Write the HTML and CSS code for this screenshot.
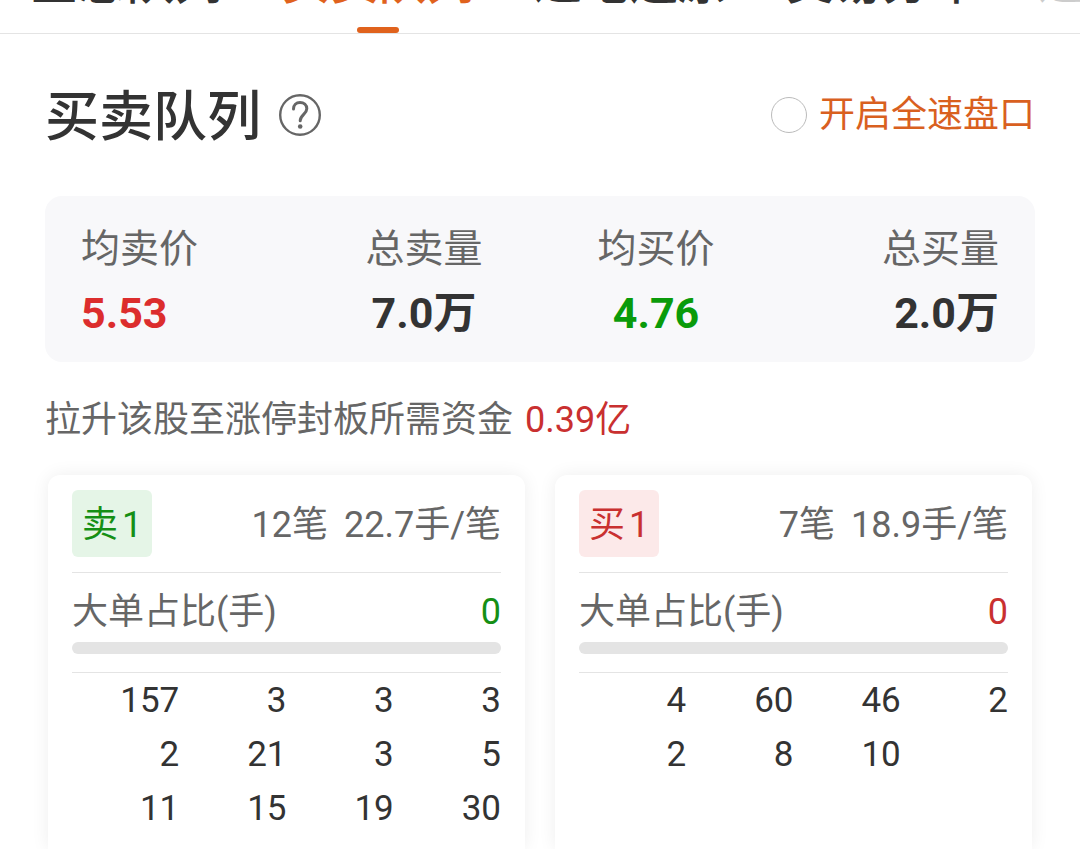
FILE: index.html
```html
<!DOCTYPE html>
<html lang="zh-CN">
<head>
<meta charset="utf-8">
<meta name="viewport" content="width=device-width, initial-scale=1">
<title>买卖队列</title>
<link rel="stylesheet" href="styles.css">
</head>
<body>
<nav class="tabs">
  <a class="tab" href="#all">全息队列</a>
  <a class="tab tab-active" href="#queue" aria-current="page">买卖队列</a>
  <a class="tab" href="#restore">逐笔还原</a>
  <a class="tab" href="#spread">交易分布</a>
  <a class="tab tab-faded" href="#more">逐</a>
</nav>
<main class="page">
  <header class="heading">
    <h1 class="title">买卖队列</h1>
    <button class="help" type="button" aria-label="说明">
      <svg viewBox="0 0 42 42" width="42" height="42" fill="none" stroke="#666" stroke-linecap="round">
        <circle cx="21" cy="21" r="19.8" stroke-width="2.4"/>
        <path d="M14.500 15C14.500 11 17.200 8.500 21 8.500s6.800 2.500 6.800 6.300c0 5.200-6.600 6-6.600 12" stroke-width="3"/>
        <circle cx="21.200" cy="32.500" r="2.300" fill="#666" stroke="none"/>
      </svg>
    </button>
    <label class="speed"><input class="speed-input" type="checkbox">开启全速盘口</label>
  </header>
  <section class="summary">
    <dl class="pair">
      <div class="stat stat-left"><dt>均卖价</dt><dd class="up">5.53</dd></div>
      <div class="stat"><dt>总卖量</dt><dd>7.0万</dd></div>
    </dl>
    <dl class="pair">
      <div class="stat"><dt>均买价</dt><dd class="down">4.76</dd></div>
      <div class="stat stat-right"><dt>总买量</dt><dd>2.0万</dd></div>
    </dl>
  </section>
  <p class="note">拉升该股至涨停封板所需资金<span class="note-value">0.39亿</span></p>
  <div class="cards">
    <section class="card">
      <div class="card-head">
        <span class="badge badge-sell"><span>卖</span><span>1</span></span>
        <span class="counts"><span>12笔</span><span>22.7手/笔</span></span>
      </div>
      <div class="ratio">
        <div class="ratio-row"><span>大单占比(手)</span><span class="ratio-sell">0</span></div>
        <div class="track"></div>
      </div>
      <table class="orders">
        <tr><td>157</td><td>3</td><td>3</td><td>3</td></tr>
        <tr><td>2</td><td>21</td><td>3</td><td>5</td></tr>
        <tr><td>11</td><td>15</td><td>19</td><td>30</td></tr>
      </table>
    </section>
    <section class="card">
      <div class="card-head">
        <span class="badge badge-buy"><span>买</span><span>1</span></span>
        <span class="counts"><span>7笔</span><span>18.9手/笔</span></span>
      </div>
      <div class="ratio">
        <div class="ratio-row"><span>大单占比(手)</span><span class="ratio-buy">0</span></div>
        <div class="track"></div>
      </div>
      <table class="orders">
        <tr><td>4</td><td>60</td><td>46</td><td>2</td></tr>
        <tr><td>2</td><td>8</td><td>10</td><td></td></tr>
      </table>
    </section>
  </div>
</main>
</body>
</html>
```

FILE: styles.css
```css
* {
  box-sizing: border-box;
}

body {
  margin: 0;
  min-height: 100vh;
  display: flex;
  flex-direction: column;
  overflow: hidden;
  background: #fff;
  color: #333;
  font-family: Roboto, "Noto Sans CJK SC", sans-serif;
  font-size: 36px;
  line-height: 50px;
}

h1, p, dl, dd {
  margin: 0;
}

/* Tab strip, scrolled partly out of view */
.tabs {
  display: flex;
  gap: 60px;
  margin-top: -41px;
  padding-left: 30px;
  border-bottom: 1px solid #e4e4e4;
  overflow: hidden;
}

.tab {
  flex: none;
  display: flex;
  flex-direction: column;
  height: 74px;
  font-size: 48px;
  line-height: 48px;
  font-weight: 500;
  color: #333;
  text-decoration: none;
}

.tab-active {
  color: #e0621d;
}

.tab-active::after {
  content: "";
  width: 42px;
  height: 6px;
  margin: auto auto 0;
  border-radius: 3px;
  background: #e0621d;
}

.tab-faded {
  color: #ccc;
}

.page {
  flex: 1;
  display: flex;
  flex-direction: column;
  padding: 51px 45px 0;
}

.heading {
  display: flex;
  align-items: center;
  height: 60px;
}

.title {
  padding-top: 6px;
  font-size: 54px;
  line-height: 60px;
  font-weight: 500;
}

.help {
  display: flex;
  margin-left: 18px;
  padding: 0;
  border: 0;
  background: none;
}

.speed {
  display: flex;
  align-items: center;
  gap: 12px;
  margin-left: auto;
  color: #d9601f;
}

.speed-input {
  appearance: none;
  width: 36px;
  height: 36px;
  margin: 0;
  border: 1px solid #bbb;
  border-radius: 50%;
  background: #fff;
}

.summary {
  display: grid;
  grid-template-columns: 1fr 1fr;
  gap: 115px;
  margin-top: 51px;
  padding: 25px 36px 17px;
  border-radius: 17px;
  background: #f8f8fa;
}

.pair {
  display: flex;
  justify-content: space-between;
}

.stat {
  text-align: center;
}

.stat-left {
  text-align: left;
}

.stat-right {
  text-align: right;
}

.stat dt {
  font-size: 39px;
  line-height: 56px;
  color: #666;
}

.stat dd {
  padding-top: 4px;
  font-size: 43px;
  line-height: 64px;
  font-weight: 700;
}

.stat .up {
  color: #dc2d2d;
}

.stat .down {
  color: #0a9b0a;
}

.note {
  margin-top: 33px;
  color: #666;
}

.note-value {
  margin-left: 12px;
  color: #c93030;
}

.cards {
  flex: 1;
  display: grid;
  grid-template-columns: 1fr 1fr;
  gap: 30px;
  margin: 30px 3px 0;
}

.card {
  padding: 15px 24px 0;
  border-radius: 12px 12px 0 0;
  background: #fff;
  box-shadow: 0 0 18px rgba(0, 0, 0, 0.07);
}

.card-head {
  display: flex;
  justify-content: space-between;
  padding-bottom: 15px;
  border-bottom: 1px solid #e4e4e4;
  line-height: 63px;
}

.badge {
  display: flex;
  gap: 4px;
  padding: 4px 10px 0;
  border-radius: 6px;
}

.badge-sell {
  background: #e5f5e7;
  color: #158f15;
}

.badge-buy {
  background: #fce9e9;
  color: #c93030;
}

.counts {
  display: flex;
  gap: 16px;
  padding-top: 4px;
  color: #666;
}

.ratio {
  padding: 14px 0 18px;
  border-bottom: 1px solid #e4e4e4;
}

.ratio-row {
  display: flex;
  justify-content: space-between;
  color: #666;
}

.ratio-sell {
  color: #158f15;
}

.ratio-buy {
  color: #c93030;
}

.track {
  height: 12px;
  margin-top: 5px;
  border-radius: 6px;
  background: #e4e4e4;
}

.orders {
  width: 100%;
  margin-top: 1px;
  table-layout: fixed;
  border-collapse: collapse;
  font-size: 35px;
}

.orders td {
  height: 54px;
  padding: 0;
  text-align: right;
}
```
